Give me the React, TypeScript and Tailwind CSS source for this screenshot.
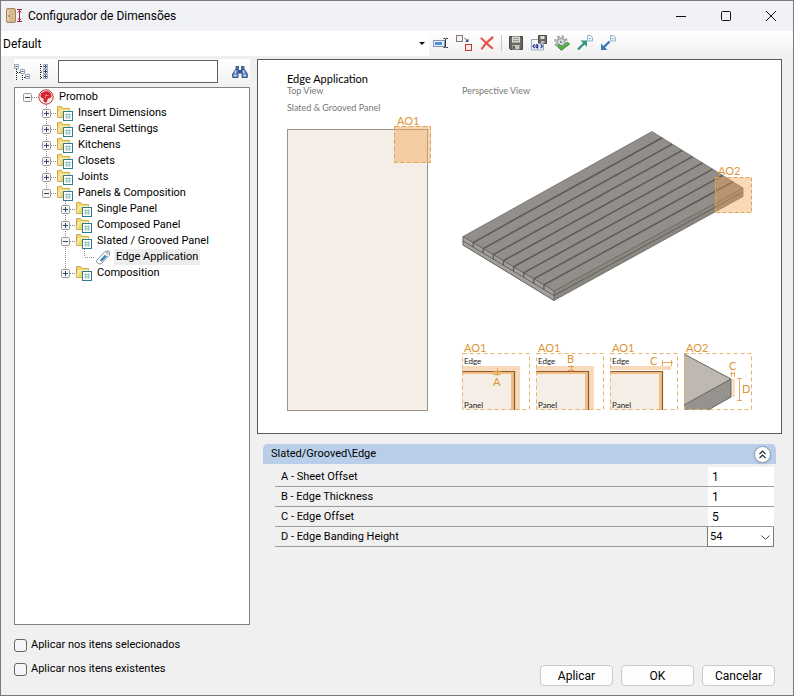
import { useState } from "react";
import type { ReactNode } from "react";
import { clsx } from "clsx";

interface TreeNode {
  label: string;
  children?: TreeNode[];
  icon?: "logo" | "folder" | "tag";
}

const TREE: TreeNode = {
  label: "Promob",
  icon: "logo",
  children: [
    { label: "Insert Dimensions" },
    { label: "General Settings" },
    { label: "Kitchens" },
    { label: "Closets" },
    { label: "Joints" },
    {
      label: "Panels & Composition",
      children: [
        { label: "Single Panel" },
        { label: "Composed Panel" },
        { label: "Slated / Grooved Panel", children: [{ label: "Edge Application", icon: "tag" }] },
        { label: "Composition" },
      ],
    },
  ],
};

const FIELDS = [
  { id: "sheet-offset", label: "A - Sheet Offset", value: "1" },
  { id: "edge-thickness", label: "B - Edge Thickness", value: "1" },
  { id: "edge-offset", label: "C - Edge Offset", value: "5" },
] as const;

/* ---------- Icons ---------- */

function Icon({ children, className }: { children: ReactNode; className?: string }) {
  return (
    <svg viewBox="0 0 16 16" className={clsx("size-4 shrink-0", className)} fill="none" aria-hidden="true">
      {children}
    </svg>
  );
}

function AppIcon() {
  return (
    <svg viewBox="0 0 18 18" className="size-[18px] shrink-0" fill="none" aria-hidden="true">
      <rect x="1.500" y="1.500" width="9" height="14" rx="1.500" fill="#d6b98c" stroke="#a08562" />
      <path d="M3 3v11" stroke="#ecdcbc" strokeWidth="1.500" />
      <circle cx="4" cy="9" r="0.800" fill="#86694a" />
      <path d="M12 2.500h5M12 14.500h5M14.500 3v11M13 5.500l1.500-2 1.500 2M13 11.500l1.500 2 1.500-2" stroke="#a8263f" />
    </svg>
  );
}

function LogoIcon() {
  return (
    <Icon>
      <circle cx="8" cy="8" r="7.200" fill="#fbeaea" stroke="#b9313a" />
      <path d="M2.500 6C3 4 5 2.500 7.500 2.300c3.500-.3 6 1.700 6 4.400 0 1.800-1.300 2.800-3.500 2.800L8.500 13.500c-1.500.3-2.800-.5-3-2V9.500C3.500 9.500 2.200 8 2.500 6z" fill="#d3242e" />
      <path d="M8 5.500L7 9M10.500 6.500h-3" stroke="#f3a9ab" strokeWidth="0.700" />
    </Icon>
  );
}

function FolderIcon() {
  return (
    <Icon>
      <path d="M.5 12.500V1.500h4l1.500 2h6.500v9z" fill="#f1d573" stroke="#cfab4b" />
      <path d="M1.500 12l1.800-6.500h9" stroke="#fbeeb5" strokeWidth="1.300" />
      <rect x="6.500" y="6.500" width="9" height="9" fill="#fff" stroke="#2f7c92" />
      <path d="M8 9.500h6M8 12h6M9.800 8.500v5.500M12.300 8.500v5.500" stroke="#79b5ae" strokeWidth="0.800" />
    </Icon>
  );
}

function TagIcon() {
  return (
    <Icon>
      <path d="M1.500 11.500L9.500 3l3.500-1.500 1.800 1.500-.6 3.500-8 8.300-2.200.2-2.400-1.800z" fill="#fbfbfc" stroke="#8b9199" />
      <path d="M5 11l5-5.200 2 1.700-5.200 5.300z" fill="#3a86b8" />
      <circle cx="12.300" cy="4" r="1" fill="#fff" stroke="#7b828b" strokeWidth="0.700" />
    </Icon>
  );
}

const NODE_ICONS = { logo: LogoIcon, folder: FolderIcon, tag: TagIcon };

function RenameIcon() {
  return (
    <Icon>
      <rect x=".5" y="5.500" width="11" height="6" fill="#eaf2fb" stroke="#7f97b5" />
      <rect x="2" y="7" width="7" height="3" fill="#4f8fd6" />
      <path d="M10.500 3.500h1.500l.8.700.7-.7H15M10.500 12.500h1.500l.8-.7.700.7H15M12.500 4v8" stroke="#333" />
    </Icon>
  );
}

function ReplaceIcon() {
  return (
    <Icon>
      <rect x=".5" y=".5" width="6" height="6" fill="#f4eeee" stroke="#857b7b" />
      <rect x="9.500" y="9.500" width="6" height="6" fill="#fbe4e4" stroke="#c23a3a" />
      <path d="M8.500 3l3 3" stroke="#2a567f" />
      <path d="M12.500 3.500v3.500H9z" fill="#2a567f" />
    </Icon>
  );
}

function DeleteIcon() {
  return (
    <Icon>
      <path d="M2.500 3.500c3 2.500 7 7 10.500 9.500M13.500 2.500C9.500 5.500 5.500 9.500 3 13.500" stroke="#e5544e" strokeWidth="2.200" strokeLinecap="round" />
    </Icon>
  );
}

function SaveIcon() {
  return (
    <Icon>
      <path d="M1.500 1.500h13v13h-12l-1-1z" fill="#6a6860" stroke="#45443f" />
      <path d="M4 1.500h8v6H4z" fill="#dcdcd6" />
      <path d="M5 3.500h6M5 5.500h6" stroke="#9b9b94" />
      <path d="M4.500 10h7v4.500h-7z" fill="#c6c6bf" />
      <path d="M6 11v3" stroke="#33322f" strokeWidth="1.500" />
    </Icon>
  );
}

function SaveAsIcon() {
  return (
    <Icon>
      <path d="M.5 4.500h12v10.500H.5z" fill="#fff" stroke="#9aa7c4" />
      <path d="M7.500.5h8v8h-8z" fill="#69675f" stroke="#4b4a45" />
      <path d="M9.500 1h4v3h-4z" fill="#dcdcd6" />
      <path d="M10 6h3.500v2.500H10z" fill="#bdbdb6" />
      <path d="M1.500 8.500h10v5.500h-10z" fill="#e8ecfa" />
      <path d="M3.800 9.500L2 11.300l1.800 1.900M6.700 9.700c-2.300-.2-2.300 3.300 0 3.100V9.700v3.300M9.700 9.500l1.800 1.800-1.800 1.900" stroke="#27358c" strokeWidth="1.200" />
    </Icon>
  );
}

function ApplyGearIcon() {
  return (
    <Icon>
      <circle cx="7" cy="7" r="5.800" stroke="#9ba0a4" strokeWidth="2" strokeDasharray="2.400 2.150" />
      <circle cx="7" cy="7" r="3.800" fill="#e3e5e7" stroke="#a6abaf" strokeWidth="2" />
      <circle cx="7" cy="7" r="1.300" fill="#8b9094" />
      <path d="M4 10l3.500 3.500L15 8" stroke="#3b8a3a" strokeWidth="3.400" />
      <path d="M4.300 10.200l3.200 3 7-5.200" stroke="#5fb54a" strokeWidth="2" />
    </Icon>
  );
}

function ExportIcon() {
  return (
    <Icon>
      <path d="M1 14.500L7 8.500" stroke="#35967a" strokeWidth="2.400" />
      <path d="M3.500 5.500h6.500v6.500z" fill="#35967a" />
      <path d="M10.500.5h3l2 2v3.500h-5z" fill="#e8f3fa" stroke="#8fb6cf" />
      <path d="M12 3.500h2" stroke="#8fb6cf" />
    </Icon>
  );
}

function ImportIcon() {
  return (
    <Icon>
      <path d="M3.500 12.500L9.500 6.500" stroke="#3b78b8" strokeWidth="2.400" />
      <path d="M1 8.500v6.500h6.500z" fill="#3b78b8" />
      <path d="M10.500.5h3l2 2v3.500h-5z" fill="#e8f3fa" stroke="#8fb6cf" />
      <path d="M12 3.500h2" stroke="#8fb6cf" />
    </Icon>
  );
}

function CollapseTreeIcon() {
  return (
    <Icon>
      <path d="M2.500 5v11M8.500 11v5M6 8.500H3M11 13.500H9" stroke="#222" strokeDasharray="1 1" />
      <path d="M.5.500h4v4h-4zM6.500 5.500h4v4h-4zM11.500 10.500h4v4h-4z" fill="#fff" stroke="#97a4b6" />
      <path d="M1.500 2.500h2M7.500 7.500h2M12.500 12.500h2" stroke="#2d4a74" />
    </Icon>
  );
}

function ExpandTreeIcon() {
  return (
    <Icon>
      <path d="M4.500 0v16" stroke="#222" strokeDasharray="1 1" />
      <path d="M5 2.500h3M5 8h3M5 13.500h3" stroke="#222" strokeDasharray="1 1" />
      <path d="M7.500.500h4v4h-4zM7.500 5.500h4v4h-4zM7.500 10.500h4v4h-4z" fill="#fff" stroke="#97a4b6" />
      <path d="M8 2.500h3M8 7.500h3M8 12.500h3M9.500 1v3M9.500 6v3M9.500 11v3" stroke="#2d4a74" />
    </Icon>
  );
}

function FindIcon() {
  return (
    <Icon>
      <path d="M4 2.500h2.500v3H4zM9.500 2.500H12v3H9.500z" fill="#5d86c0" stroke="#33558a" />
      <path d="M3.500 5.500L.7 10v3.500h5.300V8L7 6zM12.500 5.500l2.800 4.500v3.500H10V8L9 6z" fill="#5f8ac6" stroke="#33558a" />
      <path d="M6.500 6.500h3v2.500h-3z" fill="#33558a" stroke="#33558a" />
      <path d="M2 11.500h2.500M11.500 11.500H14M4 6.500L3 9M11.500 6.500l.5 2.500" stroke="#d5e4f7" strokeWidth="1.300" />
    </Icon>
  );
}

/* ---------- Title bar and toolbar ---------- */

function TitleBar() {
  const button = "flex h-full w-[45px] items-center justify-center";
  return (
    <header className="flex h-[30px] items-center bg-[#f1f2f6] pl-1">
      <AppIcon />
      <h1 className="ml-[5px] flex-1 truncate text-[12px] leading-4 text-black">Configurador de Dimensões</h1>
      <button type="button" aria-label="Minimizar" className={button}>
        <svg viewBox="0 0 12 12" className="size-3" stroke="#111" fill="none">
          <path d="M1 6.500h10" />
        </svg>
      </button>
      <button type="button" aria-label="Maximizar" className={button}>
        <svg viewBox="0 0 12 12" className="size-3" stroke="#111" fill="none">
          <rect x="1.500" y="1.500" width="9" height="9" rx="1" />
        </svg>
      </button>
      <button type="button" aria-label="Fechar" className={button}>
        <svg viewBox="0 0 12 12" className="size-3" stroke="#111" fill="none">
          <path d="M1 1l10 10M11 1L1 11" />
        </svg>
      </button>
    </header>
  );
}

const EDIT_TOOLS = [
  { label: "Renomear", icon: <RenameIcon /> },
  { label: "Substituir", icon: <ReplaceIcon /> },
  { label: "Excluir", icon: <DeleteIcon /> },
];

const FILE_TOOLS = [
  { label: "Salvar", icon: <SaveIcon /> },
  { label: "Salvar como", icon: <SaveAsIcon /> },
  { label: "Aplicar configuração", icon: <ApplyGearIcon /> },
  { label: "Exportar", icon: <ExportIcon /> },
  { label: "Importar", icon: <ImportIcon /> },
];

function ToolButtons({ tools }: { tools: { label: string; icon: ReactNode }[] }) {
  return (
    <div className="flex gap-[7px]">
      {tools.map((tool) => (
        <button key={tool.label} type="button" aria-label={tool.label}>
          {tool.icon}
        </button>
      ))}
    </div>
  );
}

function Toolbar() {
  return (
    <div className="flex h-[25px] items-center bg-linear-to-b from-white to-[#f0f0f0]">
      <div className="relative h-full w-[54%] bg-white">
        <select aria-label="Configuração" className="size-full appearance-none bg-transparent pl-[2px] text-[12px]">
          <option>Default</option>
        </select>
        <svg viewBox="0 0 6 3" className="pointer-events-none absolute top-[11px] right-1 h-[3px] w-[6px]">
          <path d="M0 0h6L3 3z" fill="#111" />
        </svg>
      </div>
      <div className="ml-1 flex items-center pb-[2px]">
        <ToolButtons tools={EDIT_TOOLS} />
        <span className="mx-[6px] h-4 w-px bg-[#c4c4c4]" />
        <ToolButtons tools={FILE_TOOLS} />
      </div>
    </div>
  );
}

/* ---------- Tree ---------- */

function GuideCell({ line }: { line: boolean }) {
  return (
    <svg viewBox="0 0 19 16" className="h-4 w-[19px] shrink-0" aria-hidden="true">
      {line && <path d="M8.500 0v16" stroke="#8a8a8a" strokeDasharray="1 1" />}
    </svg>
  );
}

interface ConnectorProps {
  root: boolean;
  last: boolean;
  leaf: boolean;
  open: boolean;
}

function Connector({ root, last, leaf, open }: ConnectorProps) {
  return (
    <svg viewBox="0 0 19 16" className="block h-4 w-[19px] shrink-0" fill="none" aria-hidden="true">
      {!root && <path d={last ? "M8.500 0v8" : "M8.500 0v16"} stroke="#8a8a8a" strokeDasharray="1 1" />}
      <path d="M9 8.500h10" stroke="#8a8a8a" strokeDasharray="1 1" />
      {!leaf && (
        <>
          <rect x="4.500" y="4.500" width="8" height="8" rx="1" fill="#f5f5f5" stroke="#9a9a9a" />
          <path d={open ? "M6 8.500h5" : "M6 8.500h5M8.500 6v5"} stroke="#33476b" />
        </>
      )}
    </svg>
  );
}

interface TreeItemProps {
  node: TreeNode;
  /** One flag per ancestor column: whether its guide line carries on below. */
  guides?: boolean[];
  root?: boolean;
  last?: boolean;
}

function TreeItem({ node, guides = [], root = false, last = true }: TreeItemProps) {
  const [open, setOpen] = useState(Boolean(node.children));
  const leaf = node.icon === "tag";
  const NodeIcon = NODE_ICONS[node.icon ?? "folder"];

  return (
    <li role="treeitem" aria-expanded={leaf ? undefined : open} aria-selected={leaf}>
      <div className="flex h-4 items-center">
        {guides.map((line, index) => (
          <GuideCell key={index} line={line} />
        ))}
        <button type="button" aria-label={node.label} disabled={leaf} onClick={() => setOpen(!open)}>
          <Connector root={root} last={last} leaf={leaf} open={open} />
        </button>
        <NodeIcon />
        <span className={clsx("ml-[3px] px-[2px] text-[11px] leading-4 whitespace-nowrap", leaf && "bg-[#ededed]")}>
          {node.label}
        </span>
      </div>
      {open && node.children && (
        <ul role="group">
          {node.children.map((child, index) => (
            <TreeItem
              key={child.label}
              node={child}
              guides={[...guides, !last]}
              last={index === node.children!.length - 1}
            />
          ))}
        </ul>
      )}
    </li>
  );
}

function Sidebar() {
  return (
    <aside className="flex w-[236px] shrink-0 flex-col">
      <div className="mb-[3px] flex h-[25px] items-center bg-linear-to-b from-white to-[#f3f3f3]">
        <button type="button" aria-label="Recolher tudo">
          <CollapseTreeIcon />
        </button>
        <button type="button" aria-label="Expandir tudo" className="ml-[6px]">
          <ExpandTreeIcon />
        </button>
        <input
          type="text"
          aria-label="Pesquisar"
          className="mx-[6px] h-[23px] w-0 min-w-0 flex-1 border border-[#5f5f5f] bg-white px-1 text-[11px] outline-none"
        />
        <button type="button" aria-label="Localizar" className="mr-[2px] ml-2">
          <FindIcon />
        </button>
      </div>
      <ul role="tree" className="flex-1 border border-[#828282] bg-white py-px pl-1 text-black">
        <TreeItem node={TREE} root />
      </ul>
    </aside>
  );
}

/* ---------- Technical drawing ---------- */

const GROOVES = [1, 2, 3, 4, 5, 6, 7, 8];

/** Slatted board in isometric view; grooves split its short side in nine. */
function Board() {
  return (
    <g strokeLinejoin="round">
      <path d="M463 236.500L554 291l189-103v8.500L554 300.500 463 245z" fill="#8b8781" stroke="#5d5b58" strokeWidth="0.700" />
      <path d="M652 131.500L463 236.500 554 291l189-103z" fill="#928e89" stroke="#66635f" strokeWidth="0.700" />
      <path d="M463 236.500L554 291v9.500L463 245z" fill="#a3a09b" stroke="#5d5b58" strokeWidth="0.700" />
      <path d="M463 241l91 54.500 189-103.500" fill="none" stroke="#55534f" strokeWidth="0.800" />
      {GROOVES.map((k) => {
        const x = 463 + (91 * k) / 9;
        const y = 236.5 + (54.5 * k) / 9;
        const endX = 652 + (91 * k) / 9;
        const endY = 131.5 + (56.5 * k) / 9;
        return (
          <g key={k} stroke="#5c5955">
            <path d={`M${x} ${y}L${endX} ${endY}`} strokeWidth="1.500" />
            <path d={`M${x} ${y}v4.500`} strokeWidth="1.300" />
          </g>
        );
      })}
    </g>
  );
}

interface DetailProps {
  x: number;
  title: string;
  /** The sheet reaches past the edge on the right side too. */
  rightStrip?: boolean;
  children: ReactNode;
}

function CornerDetail({ x, title, rightStrip = false, children }: DetailProps) {
  return (
    <g transform={`translate(${x} 353)`}>
      <path d={rightStrip ? "M0 13h58v44h-5V18H0z" : "M0 13h61v4H0z"} fill="#f8d9ba" />
      <path d="M0 18h53v39H0z" fill="#f2bd85" />
      <path d="M0 21h49v36H0z" fill="#f5eee7" />
      <path d="M0 18.500h52.500V57" fill="none" stroke="#8a5c33" strokeWidth="1.200" />
      <rect x=".5" y=".5" width="67" height="56" fill="none" stroke="#e6b36d" strokeDasharray="4 3" />
      <text x="2" y="-1" fontSize="11" fill="#dd9436">
        {title}
      </text>
      <text x="2" y="11" fontSize="8" fill="#222">
        Edge
      </text>
      <text x="2" y="55" fontSize="8" fill="#222">
        Panel
      </text>
      <g stroke="#e39336" strokeWidth="0.800" fill="none">
        {children}
      </g>
    </g>
  );
}

function EndDetail() {
  return (
    <g transform="translate(684 353)">
      <path d="M0 1l47 25L0 52z" fill="#beb8b1" />
      <path d="M0 52l47-26v18L24 57H0z" fill="#96928d" />
      <path d="M0 1l47 25L0 52M47 26v18L24 57" fill="none" stroke="#5b5955" strokeWidth="0.900" />
      <path d="M48 26h3v18h-3z" fill="#f8dfc3" />
      <rect x=".5" y=".5" width="67" height="56" fill="none" stroke="#e6b36d" strokeDasharray="4 3" />
      <path d="M53 25.500h5M53 47.500h5M55.500 25.500v22M46 20.500h5M47.500 19v5M50.500 19v5" fill="none" stroke="#e39336" strokeWidth="0.800" />
      <text x="2" y="-1" fontSize="11" fill="#dd9436">
        AO2
      </text>
      <text x="45" y="17" fontSize="11" fill="#dd9436">
        C
      </text>
      <text x="58" y="40" fontSize="11" fill="#dd9436">
        D
      </text>
    </g>
  );
}

function Drawing() {
  return (
    <figure className="border border-[#5a5a5a] bg-white">
      <svg
        viewBox="258 60 523 373"
        className="block h-auto w-full font-['Lato',sans-serif]"
        role="img"
        aria-label="Edge Application"
      >
        <text x="287" y="83" fontSize="11" fill="#000">
          Edge Application
        </text>
        <g fill="#777" fontSize="9">
          <text x="287" y="94">
            Top View
          </text>
          <text x="462" y="94">
            Perspective View
          </text>
          <text x="287" y="111">
            Slated &amp; Grooved Panel
          </text>
        </g>

        <rect x="287.500" y="129.500" width="140" height="281" fill="#f5eee7" stroke="#98938d" />
        <rect x="394.500" y="126.500" width="36" height="36" fill="#f3a95f" fillOpacity=".5" stroke="#e0a35c" strokeDasharray="5 2" />
        <text x="397" y="125" fontSize="11" fill="#dd9436">
          AO1
        </text>

        <Board />
        <rect x="715.500" y="177.500" width="36" height="35" fill="#f3a04c" fillOpacity=".4" stroke="#e0a35c" strokeDasharray="4 2" />
        <text x="718" y="175" fontSize="11" fill="#dd9436">
          AO2
        </text>

        <CornerDetail x={462} title="AO1" rightStrip>
          <path d="M31 18.500h8M31 21.500h8M35.500 15v8" />
          <text x="31" y="33" fontSize="11" fill="#dd9436" stroke="none">
            A
          </text>
        </CornerDetail>
        <CornerDetail x={536} title="AO1" rightStrip>
          <path d="M32 13.500h6M32 17.500h6M35.500 12v7" />
          <text x="31" y="10" fontSize="11" fill="#dd9436" stroke="none">
            B
          </text>
        </CornerDetail>
        <CornerDetail x={610} title="AO1">
          <path d="M52 9.500h11M52.500 7v6M61.500 7v6" />
          <text x="40" y="12" fontSize="11" fill="#dd9436" stroke="none">
            C
          </text>
        </CornerDetail>
        <EndDetail />
      </svg>
    </figure>
  );
}

/* ---------- Properties ---------- */

function Properties() {
  const [open, setOpen] = useState(true);
  const labelCell = "border-b border-[#9a9a9a] pl-[6px] text-start font-normal";

  return (
    <section className="mt-[10px] mr-[6px] ml-[6px]">
      <div className="flex h-5 items-center rounded-t-[5px] bg-[#b9cfe9] pr-[5px] pl-2">
        <h2 className="flex-1 text-[11px] leading-4">Slated/Grooved\Edge</h2>
        <button
          type="button"
          aria-label="Recolher grupo"
          aria-expanded={open}
          onClick={() => setOpen(!open)}
          className="flex size-[17px] items-center justify-center rounded-full border border-[#8b99ae] bg-white shadow-sm"
        >
          <svg viewBox="0 0 9 9" className="size-[9px]" fill="none" stroke="#222c40" strokeWidth="1.200">
            <path d="M1.500 4l3-3 3 3M1.500 8l3-3 3 3" />
          </svg>
        </button>
      </div>
      {open && (
        <div className="mt-[3px] mr-[2px] ml-3">
          <table className="w-full table-fixed border-separate border-spacing-0 text-[11px] leading-4">
            <colgroup>
              <col />
              <col className="w-[67px]" />
            </colgroup>
            <tbody>
              {FIELDS.map((field) => (
                <tr key={field.id} className="h-5">
                  <th scope="row" className={labelCell}>
                    <label htmlFor={field.id}>{field.label}</label>
                  </th>
                  <td className="border-b border-[#9a9a9a] p-0 pl-px">
                    <input
                      id={field.id}
                      type="text"
                      defaultValue={field.value}
                      className="block h-[19px] w-full bg-white pl-1 text-[12px] outline-none"
                    />
                  </td>
                </tr>
              ))}
              <tr className="h-5">
                <th scope="row" className={labelCell}>
                  <label htmlFor="banding-height">D - Edge Banding Height</label>
                </th>
                <td className="relative p-0">
                  <select
                    id="banding-height"
                    className="block h-5 w-full appearance-none border border-t-0 border-[#7a7a7a] bg-white pl-[2px] text-[11px]"
                  >
                    <option>54</option>
                  </select>
                  <svg viewBox="0 0 9 5" className="pointer-events-none absolute top-2 right-1 h-[5px] w-[9px]" fill="none" stroke="#444">
                    <path d="M.5.500l4 4 4-4" />
                  </svg>
                </td>
              </tr>
            </tbody>
          </table>
        </div>
      )}
    </section>
  );
}

function Option({ label }: { label: string }) {
  return (
    <label className="flex items-center gap-1 text-[11px] leading-4">
      <input
        type="checkbox"
        className="size-[13px] appearance-none rounded-[3px] border border-[#666] bg-[#f6f6f6] checked:bg-[#0067c0]"
      />
      {label}
    </label>
  );
}

function Footer() {
  return (
    <footer className="flex items-end justify-between pt-3 pr-[18px] pb-[9px] pl-[13px]">
      <div className="flex flex-col gap-2 pb-[9px]">
        <Option label="Aplicar nos itens selecionados" />
        <Option label="Aplicar nos itens existentes" />
      </div>
      <div className="flex gap-2">
        {["Aplicar", "OK", "Cancelar"].map((label) => (
          <button
            key={label}
            type="button"
            className="h-[21px] w-[73px] rounded-[4px] border border-[#cacaca] bg-[#fdfdfd] text-[12px] leading-4"
          >
            {label}
          </button>
        ))}
      </div>
    </footer>
  );
}

export default function App() {
  return (
    <div className="flex min-h-screen flex-col border border-[#7b7b7f] bg-[#f0f0f0] font-['Roboto',sans-serif] text-black">
      <TitleBar />
      <Toolbar />
      <main className="flex flex-1 gap-[7px] pt-[3px] pr-[11px] pl-[13px]">
        <Sidebar />
        <div className="min-w-0 flex-1">
          <Drawing />
          <Properties />
        </div>
      </main>
      <Footer />
    </div>
  );
}
